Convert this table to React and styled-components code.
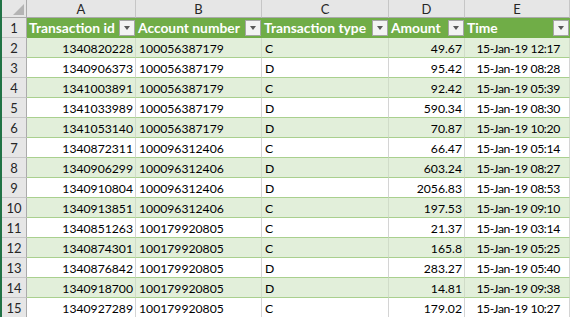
import React from "react";
import styled, { createGlobalStyle } from "styled-components";

const Global = createGlobalStyle`
  html, body { margin: 0; padding: 0; background: #fff; overflow: hidden; }
  body { font-family: Lato, "Liberation Sans", sans-serif; }
`;

const Sheet = styled.div`
  width: 570px;
  height: 317px;
  overflow: hidden;
  border-left: 2px solid #217346;
  box-sizing: border-box;
`;

const Grid = styled.div`
  display: grid;
  grid-template-columns: 25px 109px 126px 127px 76px 105px;
  grid-auto-rows: 20px;
  grid-template-rows: 18px;
`;

const Corner = styled.div`
  position: relative;
  background: #e6e6e6;
  border-right: 1px solid #ababab;
  border-bottom: 1px solid #ababab;
  &::after {
    content: "";
    position: absolute;
    right: 2px;
    bottom: 2px;
    width: 0;
    height: 0;
    border-left: 11px solid transparent;
    border-bottom: 11px solid #b4b4b4;
  }
`;

const ColHead = styled.div`
  background: #e6e6e6;
  border-right: 1px solid #c6c6c6;
  border-bottom: 1px solid #ababab;
  display: flex;
  align-items: center;
  justify-content: center;
  font-size: 13px;
  color: #262626;
  padding-top: 1px;
`;

const RowHead = styled.div`
  background: #e6e6e6;
  border-right: 1px solid #ababab;
  border-bottom: 1px solid #c6c6c6;
  display: flex;
  align-items: center;
  justify-content: center;
  font-size: 13px;
  color: #262626;
  box-sizing: border-box;
`;

const HeadCell = styled.div`
  background: #70ad47;
  color: #fff;
  font-weight: 700;
  font-size: 13.8px;
  display: flex;
  align-items: center;
  justify-content: space-between;
  padding: 0 1px 0 2px;
  border-bottom: 1px solid #70ad47;
  box-sizing: border-box;
  white-space: nowrap;
  overflow: hidden;
`;

const FilterBtn = styled.span`
  flex: none;
  width: 16px;
  height: 16px;
  box-sizing: border-box;
  background: #f3f3f3;
  border: 1px solid #a6a6a6;
  display: flex;
  align-items: center;
  justify-content: center;
  &::before {
    content: "";
    width: 0;
    height: 0;
    border-left: 3.5px solid transparent;
    border-right: 3.5px solid transparent;
    border-top: 4px solid #595959;
  }
`;

const Cell = styled.div`
  background: ${(p) => (p.$band ? "#e2efda" : "#fff")};
  border-right: 1px solid ${(p) => (p.$band ? "#d0dcc8" : "#d4d4d4")};
  border-bottom: 1px solid #a9d08e;
  box-sizing: border-box;
  display: flex;
  align-items: center;
  justify-content: ${(p) => (p.$right ? "flex-end" : "flex-start")};
  padding: 1px ${(p) => p.$padRight || 2}px 0 3px;
  font-size: 12.2px;
  letter-spacing: ${(p) => p.$tight ? "-0.35px" : "0"};
  color: #000;
  white-space: nowrap;
  overflow: hidden;
`;

const headers = [
  "Transaction id",
  "Account number",
  "Transaction type",
  "Amount",
  "Time",
];

const rows = [
  ["1340820228", "100056387179", "C", "49.67", "15-Jan-19 12:17"],
  ["1340906373", "100056387179", "D", "95.42", "15-Jan-19 08:28"],
  ["1341003891", "100056387179", "C", "92.42", "15-Jan-19 05:39"],
  ["1341033989", "100056387179", "D", "590.34", "15-Jan-19 08:30"],
  ["1341053140", "100056387179", "D", "70.87", "15-Jan-19 10:20"],
  ["1340872311", "100096312406", "C", "66.47", "15-Jan-19 05:14"],
  ["1340906299", "100096312406", "D", "603.24", "15-Jan-19 08:27"],
  ["1340910804", "100096312406", "D", "2056.83", "15-Jan-19 08:53"],
  ["1340913851", "100096312406", "C", "197.53", "15-Jan-19 09:10"],
  ["1340851263", "100179920805", "C", "21.37", "15-Jan-19 03:14"],
  ["1340874301", "100179920805", "C", "165.8", "15-Jan-19 05:25"],
  ["1340876842", "100179920805", "D", "283.27", "15-Jan-19 05:40"],
  ["1340918700", "100179920805", "D", "14.81", "15-Jan-19 09:38"],
  ["1340927289", "100179920805", "C", "179.02", "15-Jan-19 10:27"],
];

const rightCols = [true, false, false, true, true];

export default function App() {
  return (
    <>
      <Global />
      <Sheet>
        <Grid>
          <Corner />
          {["A", "B", "C", "D", "E"].map((l) => (
            <ColHead key={l}>{l}</ColHead>
          ))}
          <RowHead>1</RowHead>
          {headers.map((h) => (
            <HeadCell key={h}>
              <span>{h}</span>
              <FilterBtn />
            </HeadCell>
          ))}
          {rows.map((r, i) => (
            <React.Fragment key={i}>
              <RowHead>{i + 2}</RowHead>
              {r.map((v, j) => (
                <Cell
                  key={j}
                  $band={i % 2 === 0}
                  $right={rightCols[j]}
                  $tight={j === 4}
                  $padRight={j === 4 ? 9 : 2}
                >
                  {v}
                </Cell>
              ))}
            </React.Fragment>
          ))}
        </Grid>
      </Sheet>
    </>
  );
}
